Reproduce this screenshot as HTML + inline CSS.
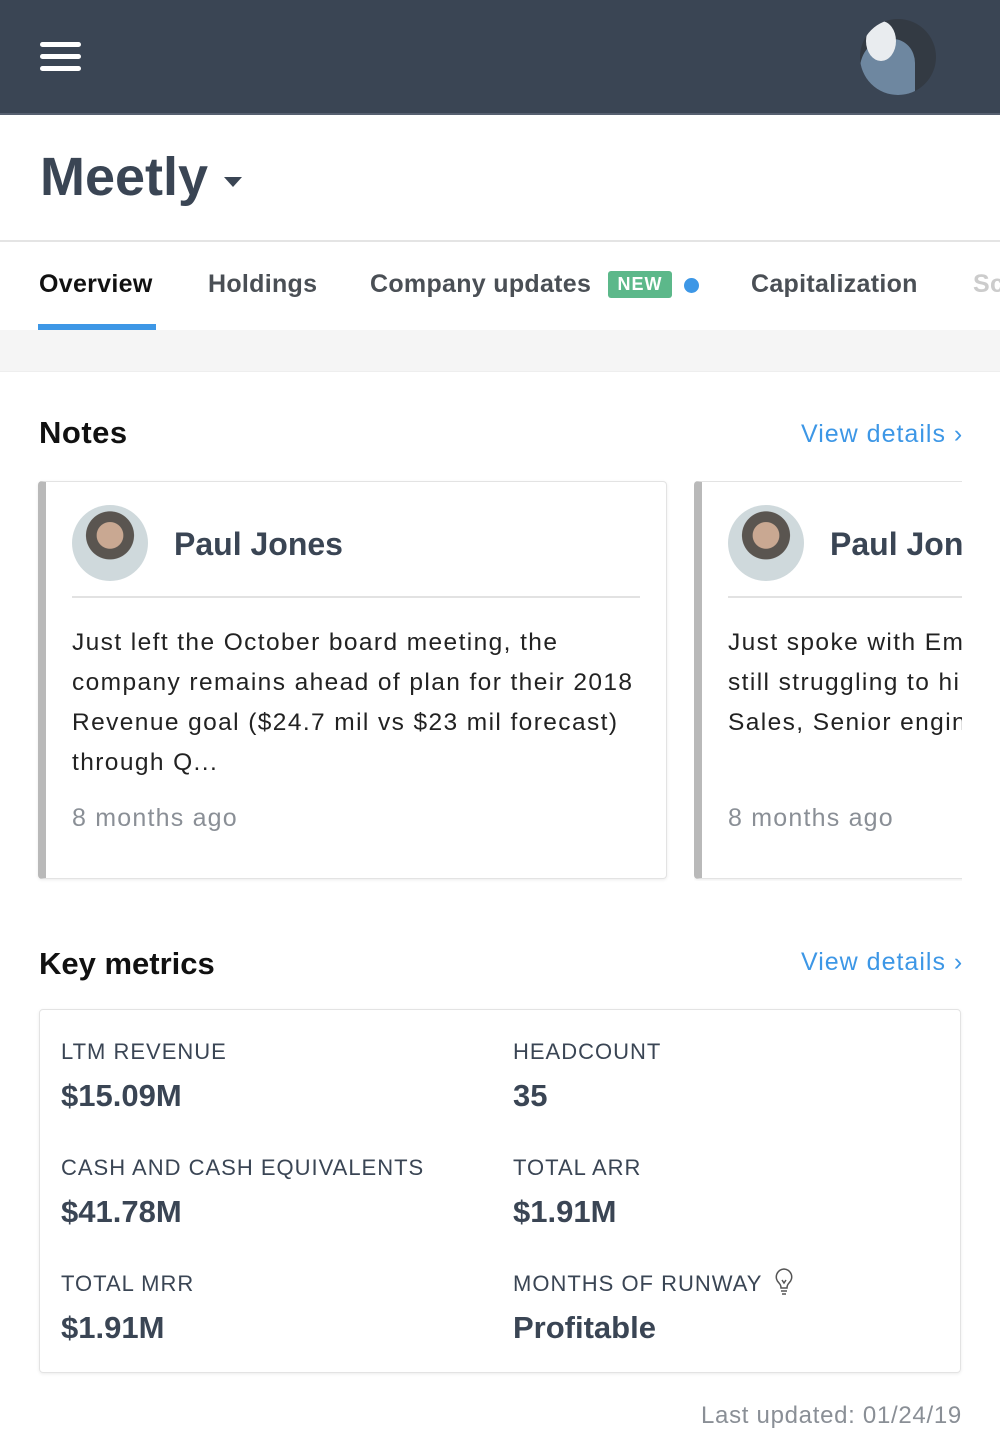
<!DOCTYPE html>
<html><head><style>
*{margin:0;padding:0;box-sizing:border-box}
body{width:1000px;height:1456px;overflow:hidden;background:#fff;font-family:"Liberation Sans",sans-serif;color:#3a4554;position:relative}
.a{position:absolute;white-space:nowrap}
.hdr{left:0;top:0;width:1000px;height:115px;background:#3a4554;border-bottom:2px solid #566070}
.bar{left:40px;width:41px;height:5px;background:#fff;border-radius:3px}
.tab{top:270px;font-size:25px;color:#4a4f55;font-weight:bold;letter-spacing:.3px}
.card{background:#fff;border:1px solid #e3e3e3;border-left:8px solid #b9b9b9;border-radius:4px;box-shadow:0 1px 3px rgba(0,0,0,.08)}
.av{width:76px;height:76px;border-radius:50%;background:radial-gradient(circle at 50% 40%,#c9a892 0 22%,#5a5550 23% 40%,#cfd9dc 41%)}
.body{font-size:24.5px;line-height:40px;color:#222;letter-spacing:1.4px}
.lbl{font-size:22px;color:#3a4554;letter-spacing:1px}
.val{font-size:31px;font-weight:bold;color:#3a4554}
.link{font-size:25px;color:#3d97e6;letter-spacing:1px}
.ago{font-size:25px;color:#8a8f96;letter-spacing:1.2px}
</style></head><body>
<div class="a hdr"></div>
<div class="a bar" style="top:42px"></div><div class="a bar" style="top:54px"></div><div class="a bar" style="top:66px"></div>
<div class="a" style="left:860px;top:19px;width:76px;height:76px;border-radius:50%;background:#333a43;overflow:hidden">
<div style="position:absolute;left:0;top:20px;width:55px;height:60px;border-radius:50% 40% 0 0;background:#6e87a0"></div>
<div style="position:absolute;left:6px;top:2px;width:30px;height:40px;border-radius:50%;background:#e9ecef"></div></div>
<div class="a" style="left:40px;top:146px;font-size:54px;font-weight:bold;color:#3a4554">Meetly</div>
<div class="a" style="left:224px;top:177px;width:0;height:0;border-left:9px solid transparent;border-right:9px solid transparent;border-top:10px solid #3a4554"></div>
<div class="a" style="left:0;top:240px;width:1000px;height:2px;background:#e4e4e4"></div>
<div class="a tab" style="left:39px;color:#111">Overview</div>
<div class="a" style="left:38px;top:324px;width:118px;height:6px;background:#3d97e6"></div>
<div class="a tab" style="left:208px">Holdings</div>
<div class="a tab" style="left:370px">Company updates</div>
<div class="a" style="left:608px;top:271px;width:64px;height:27px;background:#5cb88a;border-radius:3px;color:#fff;font-size:18px;font-weight:bold;text-align:center;line-height:27px;letter-spacing:1px">NEW</div>
<div class="a" style="left:684px;top:278px;width:15px;height:15px;border-radius:50%;background:#3d97e6"></div>
<div class="a tab" style="left:751px">Capitalization</div>
<div class="a tab" style="left:973px;color:#ccc">Sc</div>
<div class="a" style="left:0;top:330px;width:1000px;height:42px;background:#f5f5f5;border-bottom:1px solid #eee"></div>
<div class="a" style="left:39px;top:415px;font-size:31px;font-weight:bold;color:#111;letter-spacing:.5px">Notes</div>
<div class="a link" style="left:801px;top:420px">View details ›</div>
<div class="a card" style="left:38px;top:481px;width:629px;height:398px"></div>
<div class="a av" style="left:72px;top:505px"></div>
<div class="a" style="left:174px;top:526px;font-size:32px;font-weight:bold;color:#3a4554">Paul Jones</div>
<div class="a" style="left:72px;top:596px;width:568px;height:2px;background:#e2e2e2"></div>
<div class="a body" style="left:72px;top:623px">Just left the October board meeting, the<br>company remains ahead of plan for their 2018<br>Revenue goal ($24.7 mil vs $23 mil forecast)<br>through Q...</div>
<div class="a ago" style="left:72px;top:804px">8 months ago</div>
<div style="position:absolute;left:694px;top:481px;width:268px;height:400px;overflow:hidden">
<div class="a card" style="left:0;top:0;width:400px;height:398px"></div>
<div class="a av" style="left:34px;top:24px"></div>
<div class="a" style="left:136px;top:45px;font-size:32px;font-weight:bold;color:#3a4554">Paul Jones</div>
<div class="a" style="left:34px;top:115px;width:300px;height:2px;background:#e2e2e2"></div>
<div class="a body" style="left:34px;top:142px">Just spoke with Emily<br>still struggling to hire<br>Sales, Senior engineer</div>
<div class="a ago" style="left:34px;top:323px">8 months ago</div>
</div>
<div class="a" style="left:39px;top:946px;font-size:31px;font-weight:bold;color:#111">Key metrics</div>
<div class="a link" style="left:801px;top:948px">View details ›</div>
<div class="a" style="left:39px;top:1009px;width:922px;height:364px;border:1px solid #e3e3e3;border-radius:4px;box-shadow:0 1px 3px rgba(0,0,0,.08)"></div>
<div class="a lbl" style="left:61px;top:1039px">LTM REVENUE</div>
<div class="a val" style="left:61px;top:1078px">$15.09M</div>
<div class="a lbl" style="left:513px;top:1039px">HEADCOUNT</div>
<div class="a val" style="left:513px;top:1078px">35</div>
<div class="a lbl" style="left:61px;top:1155px">CASH AND CASH EQUIVALENTS</div>
<div class="a val" style="left:61px;top:1194px">$41.78M</div>
<div class="a lbl" style="left:513px;top:1155px">TOTAL ARR</div>
<div class="a val" style="left:513px;top:1194px">$1.91M</div>
<div class="a lbl" style="left:61px;top:1271px">TOTAL MRR</div>
<div class="a val" style="left:61px;top:1310px">$1.91M</div>
<div class="a lbl" style="left:513px;top:1271px">MONTHS OF RUNWAY</div>
<svg class="a" style="left:773px;top:1267px" width="22" height="30" viewBox="0 0 22 30"><path d="M11 2a8 8 0 0 0-5 14c1.5 1.5 2 3 2 5h6c0-2 .5-3.5 2-5A8 8 0 0 0 11 2zM8 24h6M9 27h4M9 13l2 3 2-3" fill="none" stroke="#555" stroke-width="1.5"/></svg>
<div class="a val" style="left:513px;top:1310px">Profitable</div>
<div class="a" style="left:701px;top:1402px;font-size:24px;color:#8a8f96;letter-spacing:.7px">Last updated: 01/24/19</div>
</body></html>
